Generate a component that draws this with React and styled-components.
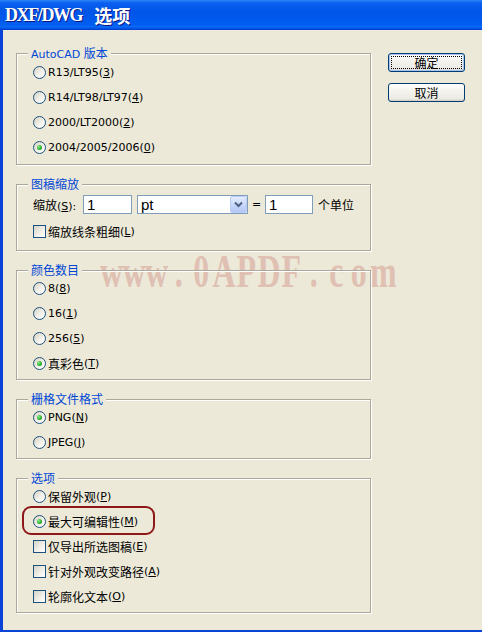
import styled, { createGlobalStyle } from 'styled-components';

const GlobalStyle = createGlobalStyle`
  html, body {
    margin: 0;
    padding: 0;
    background: #ece9d8;
  }
  body {
    font-family: "DejaVu Sans", "Noto Sans CJK SC", sans-serif;
    font-size: 11px;
    color: #000;
  }
`;

const Window = styled.div`
  position: relative;
  width: 482px;
  height: 632px;
  display: flex;
  flex-direction: column;
  background: #ece9d8;
  overflow: hidden;
`;

const TitleBar = styled.div`
  flex: none;
  height: 30px;
  display: flex;
  align-items: center;
  gap: 12px;
  padding-left: 5px;
  background: linear-gradient(180deg, #2a86f9 0%, #0a5ff0 10%, #0055e8 40%, #005ef0 82%, #0a6af6 90%, #0048d8 97%, #003ccf 100%);
  color: #fff;
  text-shadow: 1px 1px 0 #0a1883;
  white-space: pre;
`;

const TitleLatin = styled.span`
  font: bold 18px "Liberation Serif", serif;
  letter-spacing: -1.4px;
`;

const TitleZh = styled.span`
  font: bold 18px "Noto Sans CJK SC", sans-serif;
`;

const Body = styled.div`
  flex: 1;
  display: flex;
  align-items: flex-start;
  padding: 23px 0 0 13px;
  border-left: 3px solid #0842d6;
  border-bottom: 2px solid #0842d6;
`;

const LeftColumn = styled.div`
  display: flex;
  flex-direction: column;
  gap: 19px;
`;

const RightColumn = styled.div`
  display: flex;
  flex-direction: column;
  gap: 11px;
  margin-left: 17px;
`;

const Group = styled.section`
  position: relative;
  z-index: 1;
  width: 355px;
  box-sizing: border-box;
  border: 1px solid #aca899;
  box-shadow: 1px 1px 0 #fff, inset 1px 1px 0 #fff;
  padding: ${p => p.$pad || '5px 0 3px 16px'};
`;

const Legend = styled.span`
  position: absolute;
  left: 11px;
  top: -8px;
  padding: 0 3px;
  line-height: 14px;
  background: #ece9d8;
  color: #0046d5;
`;

const Zh = styled.span`
  font-family: "Noto Sans CJK SC", sans-serif;
  font-size: 12px;
`;

const Row = styled.div`
  position: relative;
  display: flex;
  align-items: center;
  height: 25px;
  margin-top: ${p => p.$mt || 0}px;
  white-space: nowrap;
`;

const Radio = styled.span`
  flex: none;
  width: 13px;
  height: 13px;
  box-sizing: border-box;
  border-radius: 50%;
  border: 1px solid #1c5180;
  background: linear-gradient(135deg, #d6d2c2 0%, #f4f3ee 60%, #fff 100%);
  margin-right: 2px;
  display: flex;
  align-items: center;
  justify-content: center;
  &::after {
    content: '';
    display: ${p => (p.$on ? 'block' : 'none')};
    width: 5px;
    height: 5px;
    border-radius: 50%;
    background: radial-gradient(circle at 35% 35%, #8ee88e 0%, #29b229 55%, #178a17 100%);
  }
`;

const Check = styled.span`
  flex: none;
  width: 13px;
  height: 13px;
  box-sizing: border-box;
  border: 1px solid #1c5180;
  background: linear-gradient(135deg, #d6d3c6 0%, #f2f1ea 60%, #fff 100%);
  margin-right: 2px;
`;

const Highlight = styled.span`
  position: absolute;
  left: -11px;
  top: -3px;
  width: 133px;
  height: 29px;
  box-sizing: border-box;
  border: 2px solid #8e1818;
  border-radius: 9px;
`;

const FieldRow = styled.div`
  display: flex;
  align-items: center;
  height: 21px;
`;

const FieldLabel = styled.span`
  width: 50px;
  flex: none;
  white-space: nowrap;
`;

const TextBox = styled.div`
  width: ${p => p.$w}px;
  height: 19px;
  box-sizing: border-box;
  border: 1px solid #7f9db9;
  background: #fff;
  padding-left: 3px;
  font: 15px/17px "Liberation Sans", sans-serif;
`;

const Select = styled.div`
  width: 111px;
  height: 19px;
  margin-left: 5px;
  box-sizing: border-box;
  border: 1px solid #7f9db9;
  background: #fff;
  display: flex;
  align-items: center;
  justify-content: space-between;
  padding-left: 3px;
  font: 15px/17px "Liberation Sans", sans-serif;
`;

const DropButton = styled.span`
  width: 17px;
  height: 17px;
  box-sizing: border-box;
  border: 1px solid #b9cdf6;
  border-radius: 2px;
  background: linear-gradient(180deg, #e4ecfd 0%, #c9d8fb 50%, #b3c6f4 100%);
  display: flex;
  align-items: center;
  justify-content: center;
`;

const Eq = styled.span`
  width: 17px;
  text-align: center;
`;

const Unit = styled.span`
  margin-left: 5px;
`;

const Button = styled.button`
  position: relative;
  width: 77px;
  height: 19px;
  padding: 0;
  border: 1px solid #003c74;
  border-radius: 3px;
  background: linear-gradient(180deg, #fff 0%, #f4f3ee 40%, #ecebe6 85%, #d6d0c5 100%);
  box-shadow: ${p => (p.$default ? 'inset 0 0 0 1px #a8c4ee' : 'inset 0 -1px 0 #d6d0c5')};
  font-family: "Noto Sans CJK SC", sans-serif;
  font-size: 12px;
  line-height: 17px;
  color: #000;
  &::after {
    content: '';
    display: ${p => (p.$default ? 'block' : 'none')};
    position: absolute;
    inset: 2px;
    border: 1px dotted #000;
  }
`;

const Watermark = styled.div`
  position: absolute;
  z-index: 0;
  left: 100px;
  top: 248px;
  display: flex;
  font: bold 44px/44px "Liberation Serif", serif;
  color: #dfc0b2;
  transform: scale(0.726, 1.07);
  transform-origin: left top;
  white-space: nowrap;
`;

const WatermarkChar = styled.span`
  width: 31px;
  text-align: center;
`;

const Chevron = () => (
  <svg width="9" height="7" viewBox="0 0 9 7">
    <path d="M1 1.5 L4.5 5 L8 1.5" fill="none" stroke="#4d6185" strokeWidth="2" />
  </svg>
);

const RadioRow = ({ on, children, mark }) => (
  <Row>
    {mark && <Highlight />}
    <Radio $on={on} />
    {children}
  </Row>
);

const CheckRow = ({ children, mt }) => (
  <Row $mt={mt}>
    <Check />
    {children}
  </Row>
);

export default function App() {
  return (
    <>
      <GlobalStyle />
      <Window>
        <TitleBar>
          <TitleLatin>DXF/DWG</TitleLatin>
          <TitleZh>选项</TitleZh>
        </TitleBar>
        <Body>
          <LeftColumn>
            <Group $pad="6px 0 4px 16px">
              <Legend>AutoCAD <Zh>版本</Zh></Legend>
              <RadioRow>R13/LT95(<u>3</u>)</RadioRow>
              <RadioRow>R14/LT98/LT97(<u>4</u>)</RadioRow>
              <RadioRow>2000/LT2000(<u>2</u>)</RadioRow>
              <RadioRow on>2004/2005/2006(<u>0</u>)</RadioRow>
            </Group>

            <Group $pad="9px 0 6px 16px">
              <Legend><Zh>图稿缩放</Zh></Legend>
              <FieldRow>
                <FieldLabel><Zh>缩放</Zh>(<u>S</u>):</FieldLabel>
                <TextBox $w={49}>1</TextBox>
                <Select>
                  pt
                  <DropButton><Chevron /></DropButton>
                </Select>
                <Eq>=</Eq>
                <TextBox $w={48}>1</TextBox>
                <Unit><Zh>个单位</Zh></Unit>
              </FieldRow>
              <CheckRow mt={4}><Zh>缩放线条粗细</Zh>(<u>L</u>)</CheckRow>
            </Group>

            <Group>
              <Legend><Zh>颜色数目</Zh></Legend>
              <RadioRow>8(<u>8</u>)</RadioRow>
              <RadioRow>16(<u>1</u>)</RadioRow>
              <RadioRow>256(<u>5</u>)</RadioRow>
              <RadioRow on><Zh>真彩色</Zh>(<u>T</u>)</RadioRow>
            </Group>

            <Group>
              <Legend><Zh>栅格文件格式</Zh></Legend>
              <RadioRow on>PNG(<u>N</u>)</RadioRow>
              <RadioRow>JPEG(<u>J</u>)</RadioRow>
            </Group>

            <Group>
              <Legend><Zh>选项</Zh></Legend>
              <RadioRow><Zh>保留外观</Zh>(<u>P</u>)</RadioRow>
              <RadioRow on mark><Zh>最大可编辑性</Zh>(<u>M</u>)</RadioRow>
              <CheckRow><Zh>仅导出所选图稿</Zh>(<u>E</u>)</CheckRow>
              <CheckRow><Zh>针对外观改变路径</Zh>(<u>A</u>)</CheckRow>
              <CheckRow><Zh>轮廓化文本</Zh>(<u>O</u>)</CheckRow>
            </Group>
          </LeftColumn>

          <RightColumn>
            <Button $default>确定</Button>
            <Button>取消</Button>
          </RightColumn>
        </Body>
        <Watermark>
          {'www.0APDF.com'.split('').map((c, i) => (
            <WatermarkChar key={i}>{c}</WatermarkChar>
          ))}
        </Watermark>
      </Window>
    </>
  );
}
